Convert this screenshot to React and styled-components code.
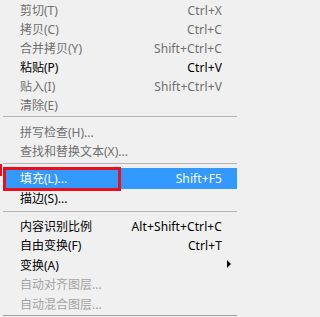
import React from "react";
import styled, { createGlobalStyle } from "styled-components";

const Global = createGlobalStyle`
  html, body { margin: 0; padding: 0; background: #f0f0f0; }
  body { width: 237px; height: 317px; overflow: hidden; }
`;

const Menu = styled.div`
  position: relative;
  width: 237px;
  height: 317px;
  padding-top: 1px;
  box-sizing: border-box;
  background: #f0f0f0;
  font-family: "Noto Sans", "Noto Sans CJK SC", sans-serif;
  font-size: 12px;
  display: flex;
  flex-direction: column;
`;

const toneColor = { normal: "#000000", dim: "#6f6f6f", faint: "#a3a3a3" };

const Item = styled.div`
  display: flex;
  align-items: center;
  height: ${(p) => p.$h}px;
  margin-left: 3px;
  padding: 0 15px 0 17px;
  color: ${(p) => (p.$active ? "#ffffff" : toneColor[p.$tone])};
  background: ${(p) => (p.$active ? "#3399ff" : "transparent")};
  white-space: nowrap;
`;

const Label = styled.span`
  flex: 1;
  line-height: 1;
`;

const Shortcut = styled.span`
  line-height: 1;
  letter-spacing: 0.1px;
`;

const SubArrow = styled.span`
  width: 0;
  height: 0;
  margin: -3px -9px 0 0;
  border-top: 4px solid transparent;
  border-bottom: 4px solid transparent;
  border-left: 4px solid #000;
`;

const Separator = styled.div`
  height: 1px;
  flex-shrink: 0;
  background: ${(p) => p.$color || "#b4b4b4"};
  margin: ${(p) => p.$top}px 0 ${(p) => p.$bottom}px 3px;
`;

const FocusRing = styled.div`
  position: absolute;
  left: 3px;
  top: 167px;
  width: 118px;
  height: 24px;
  box-sizing: border-box;
  border: 3px solid #e8101a;
  pointer-events: none;
`;

const EdgeMark = styled.div`
  position: absolute;
  left: 0;
  top: 164px;
  width: 2px;
  height: 12px;
  background: #e8101a;
`;

const groups = [
  {
    h: 19,
    sep: { top: 1, bottom: 6 },
    items: [
      ["剪切(T)", "Ctrl+X", "dim"],
      ["拷贝(C)", "Ctrl+C", "dim"],
      ["合并拷贝(Y)", "Shift+Ctrl+C", "dim"],
      ["粘贴(P)", "Ctrl+V", "normal"],
      ["贴入(I)", "Shift+Ctrl+V", "dim"],
      ["清除(E)", "", "dim"],
    ],
  },
  {
    h: 19,
    sep: { top: 2, bottom: 4 },
    items: [
      ["拼写检查(H)...", "", "dim"],
      ["查找和替换文本(X)...", "", "dim"],
    ],
  },
  {
    h: 19,
    sep: { top: 3, bottom: 5 },
    items: [
      ["填充(L)...", "Shift+F5", "normal", { active: true, h: 21 }],
      ["描边(S)...", "", "normal"],
    ],
  },
  {
    h: 19.5,
    sep: { top: 0.5, bottom: 0, color: "#a0a0a0" },
    items: [
      ["内容识别比例", "Alt+Shift+Ctrl+C", "normal"],
      ["自由变换(F)", "Ctrl+T", "normal"],
      ["变换(A)", "", "normal", { sub: true }],
      ["自动对齐图层...", "", "faint"],
      ["自动混合图层...", "", "faint"],
    ],
  },
];

export default function App() {
  return (
    <>
      <Global />
      <Menu>
        {groups.map((g, gi) => (
          <React.Fragment key={gi}>
            {g.items.map(([label, sc, tone, opt = {}]) => (
              <Item key={label} $h={opt.h || g.h} $tone={tone} $active={opt.active}>
                <Label>{label}</Label>
                {sc && <Shortcut>{sc}</Shortcut>}
                {opt.sub && <SubArrow />}
              </Item>
            ))}
            <Separator $top={g.sep.top} $bottom={g.sep.bottom} $color={g.sep.color} />
          </React.Fragment>
        ))}
        <EdgeMark />
        <FocusRing />
      </Menu>
    </>
  );
}
